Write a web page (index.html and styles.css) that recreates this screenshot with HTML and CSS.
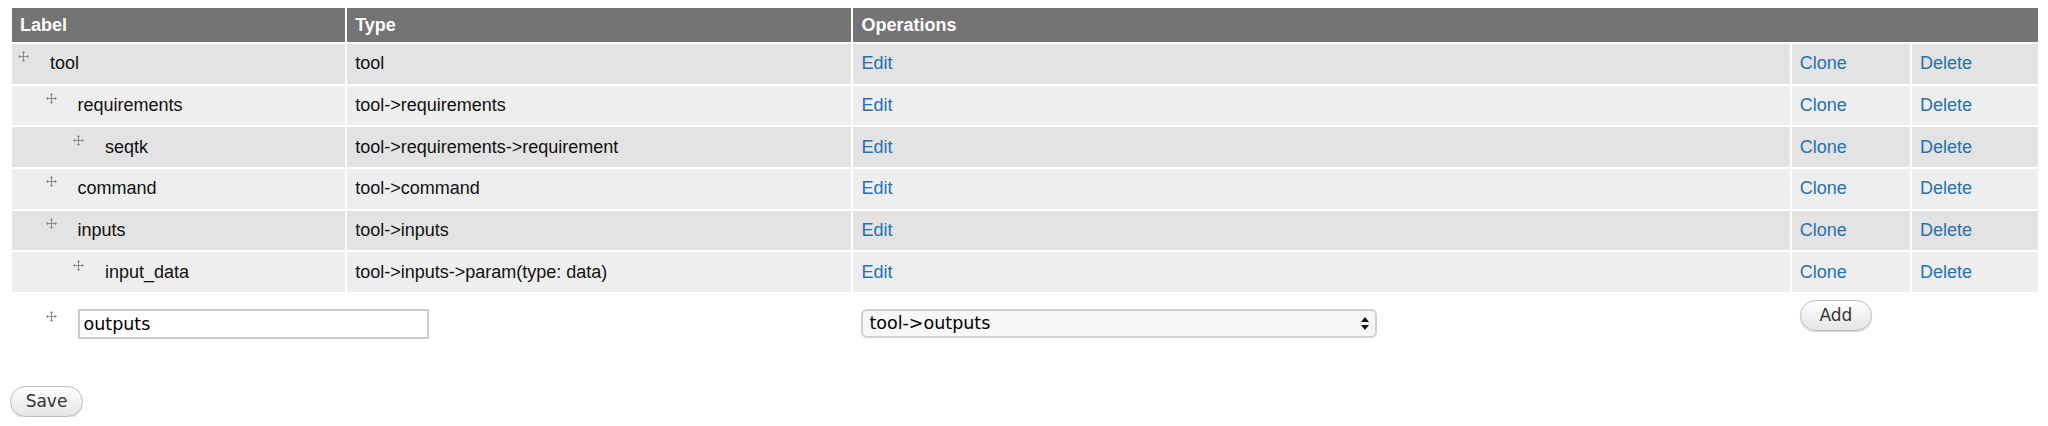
FILE: index.html
```html
<!DOCTYPE html>
<html>
<head>
<meta charset="utf-8">
<title>Tool tree</title>
<link rel="stylesheet" href="styles.css">
</head>
<body>
<div class="page">
  <table class="tree">
    <colgroup>
      <col class="c-label"><col class="c-type"><col class="c-edit"><col class="c-clone"><col class="c-delete">
    </colgroup>
    <thead>
      <tr><th>Label</th><th>Type</th><th colspan="3">Operations</th></tr>
    </thead>
    <tbody>
      <tr class="odd">
        <td class="label"><div class="lbl d0"><span class="handle"><svg viewBox="0 0 11 11" width="11" height="11"><path d="M5.5 1.5V9.5M1.5 5.5H9.5" stroke="#8a8a8a" stroke-width="1"/><path d="M5.5 0L3.8 2H7.2ZM5.5 11L3.8 9H7.2ZM0 5.5L2 3.8V7.2ZM11 5.5L9 3.8V7.2Z" fill="#8a8a8a"/></svg></span><span>tool</span></div></td>
        <td>tool</td>
        <td><a href="#">Edit</a></td><td><a href="#">Clone</a></td><td><a href="#">Delete</a></td>
      </tr>
      <tr class="even">
        <td class="label"><div class="lbl d1"><span class="handle"><svg viewBox="0 0 11 11" width="11" height="11"><path d="M5.5 1.5V9.5M1.5 5.5H9.5" stroke="#8a8a8a" stroke-width="1"/><path d="M5.5 0L3.8 2H7.2ZM5.5 11L3.8 9H7.2ZM0 5.5L2 3.8V7.2ZM11 5.5L9 3.8V7.2Z" fill="#8a8a8a"/></svg></span><span>requirements</span></div></td>
        <td>tool-&gt;requirements</td>
        <td><a href="#">Edit</a></td><td><a href="#">Clone</a></td><td><a href="#">Delete</a></td>
      </tr>
      <tr class="odd">
        <td class="label"><div class="lbl d2"><span class="handle"><svg viewBox="0 0 11 11" width="11" height="11"><path d="M5.5 1.5V9.5M1.5 5.5H9.5" stroke="#8a8a8a" stroke-width="1"/><path d="M5.5 0L3.8 2H7.2ZM5.5 11L3.8 9H7.2ZM0 5.5L2 3.8V7.2ZM11 5.5L9 3.8V7.2Z" fill="#8a8a8a"/></svg></span><span>seqtk</span></div></td>
        <td>tool-&gt;requirements-&gt;requirement</td>
        <td><a href="#">Edit</a></td><td><a href="#">Clone</a></td><td><a href="#">Delete</a></td>
      </tr>
      <tr class="even">
        <td class="label"><div class="lbl d1"><span class="handle"><svg viewBox="0 0 11 11" width="11" height="11"><path d="M5.5 1.5V9.5M1.5 5.5H9.5" stroke="#8a8a8a" stroke-width="1"/><path d="M5.5 0L3.8 2H7.2ZM5.5 11L3.8 9H7.2ZM0 5.5L2 3.8V7.2ZM11 5.5L9 3.8V7.2Z" fill="#8a8a8a"/></svg></span><span>command</span></div></td>
        <td>tool-&gt;command</td>
        <td><a href="#">Edit</a></td><td><a href="#">Clone</a></td><td><a href="#">Delete</a></td>
      </tr>
      <tr class="odd">
        <td class="label"><div class="lbl d1"><span class="handle"><svg viewBox="0 0 11 11" width="11" height="11"><path d="M5.5 1.5V9.5M1.5 5.5H9.5" stroke="#8a8a8a" stroke-width="1"/><path d="M5.5 0L3.8 2H7.2ZM5.5 11L3.8 9H7.2ZM0 5.5L2 3.8V7.2ZM11 5.5L9 3.8V7.2Z" fill="#8a8a8a"/></svg></span><span>inputs</span></div></td>
        <td>tool-&gt;inputs</td>
        <td><a href="#">Edit</a></td><td><a href="#">Clone</a></td><td><a href="#">Delete</a></td>
      </tr>
      <tr class="even">
        <td class="label"><div class="lbl d2"><span class="handle"><svg viewBox="0 0 11 11" width="11" height="11"><path d="M5.5 1.5V9.5M1.5 5.5H9.5" stroke="#8a8a8a" stroke-width="1"/><path d="M5.5 0L3.8 2H7.2ZM5.5 11L3.8 9H7.2ZM0 5.5L2 3.8V7.2ZM11 5.5L9 3.8V7.2Z" fill="#8a8a8a"/></svg></span><span>input_data</span></div></td>
        <td>tool-&gt;inputs-&gt;param(type: data)</td>
        <td><a href="#">Edit</a></td><td><a href="#">Clone</a></td><td><a href="#">Delete</a></td>
      </tr>
      <tr class="new">
        <td class="label"><div class="lbl-new d1"><span class="handle"><svg viewBox="0 0 11 11" width="11" height="11"><path d="M5.5 1.5V9.5M1.5 5.5H9.5" stroke="#8a8a8a" stroke-width="1"/><path d="M5.5 0L3.8 2H7.2ZM5.5 11L3.8 9H7.2ZM0 5.5L2 3.8V7.2ZM11 5.5L9 3.8V7.2Z" fill="#8a8a8a"/></svg></span><input class="text" type="text" value="outputs"></div></td>
        <td></td>
        <td><div class="select-wrap"><select class="sel"><option>tool-&gt;outputs</option></select><svg class="arrows" viewBox="0 0 8 13" width="8" height="13"><path d="M4 0L8 5H0ZM4 13L8 8H0Z" fill="#111"/></svg></div></td>
        <td><button class="btn btn-add" type="button">Add</button></td>
        <td></td>
      </tr>
    </tbody>
  </table>
  <div class="actions"><button class="btn btn-save" type="button">Save</button></div>
</div>
</body>
</html>
```
FILE: styles.css
```css
* { box-sizing: border-box; }
html, body { margin: 0; padding: 0; background: #fff; }
body { font-family: "Liberation Sans", Arial, sans-serif; font-size: 18px; color: #111; }
.page { padding: 6px 8px 0 10px; }

.tree { width: 100%; border-collapse: separate; border-spacing: 2px; table-layout: fixed; }
.c-label { width: 333px; }
.c-type { width: 504px; }
.c-edit { width: 936px; }
.c-clone { width: 118px; }
.c-delete { width: 126px; }

.tree th { background: #747474; color: #fff; font-weight: bold; text-align: left; height: 34px; padding: 0 8px; vertical-align: middle; }
.tree td { height: 39.67px; padding: 0 8px; vertical-align: middle; white-space: nowrap; }
.tree tr.odd td { background: #e3e3e3; }
.tree tr.even td { background: #eeeeee; }
.tree td.label { padding-left: 6px; }
.tree a { color: #1f72b3; text-decoration: none; }

.lbl { display: flex; align-items: center; }
.handle { display: flex; width: 11px; height: 11px; margin-right: 21px; margin-bottom: 14px; flex: none; }
.d1 { padding-left: 27.5px; }
.d2 { padding-left: 55px; }

.tree tr.new td { height: 48px; vertical-align: top; padding-top: 6px; background: #fff; overflow: visible; }
.lbl-new { display: flex; align-items: flex-start; overflow: visible; }
.lbl-new .handle { margin-top: 11px; margin-bottom: 0; }
.text { flex: none; margin-top: 9px; width: 351px; height: 30px; border: 2px solid #cdcdcd; padding: 0 4px; font-family: "DejaVu Sans", sans-serif; font-size: 17.5px; color: #000; background: #fff; outline: none; }

.select-wrap { position: relative; width: 516px; margin-top: 9px; }
.sel { appearance: none; -webkit-appearance: none; width: 516px; height: 29px; border: 2px solid #d0d0d0; border-radius: 6px; background: #f7f7f7; padding: 0 6px; font-family: "DejaVu Sans", sans-serif; font-size: 17.5px; color: #000; outline: none; }
.arrows { position: absolute; right: 8px; top: 8px; pointer-events: none; }

.btn { height: 31px; border: 1px solid #bdbdbd; border-radius: 16px; background: linear-gradient(#ffffff, #e6e6e6); box-shadow: 0 1px 1px rgba(0,0,0,0.18); font-family: "DejaVu Sans", sans-serif; font-size: 17px; color: #333; }
.btn-add { width: 72px; padding: 0; }
.btn-save { width: 73px; padding: 0; }
.actions { margin-top: 42px; }
```
